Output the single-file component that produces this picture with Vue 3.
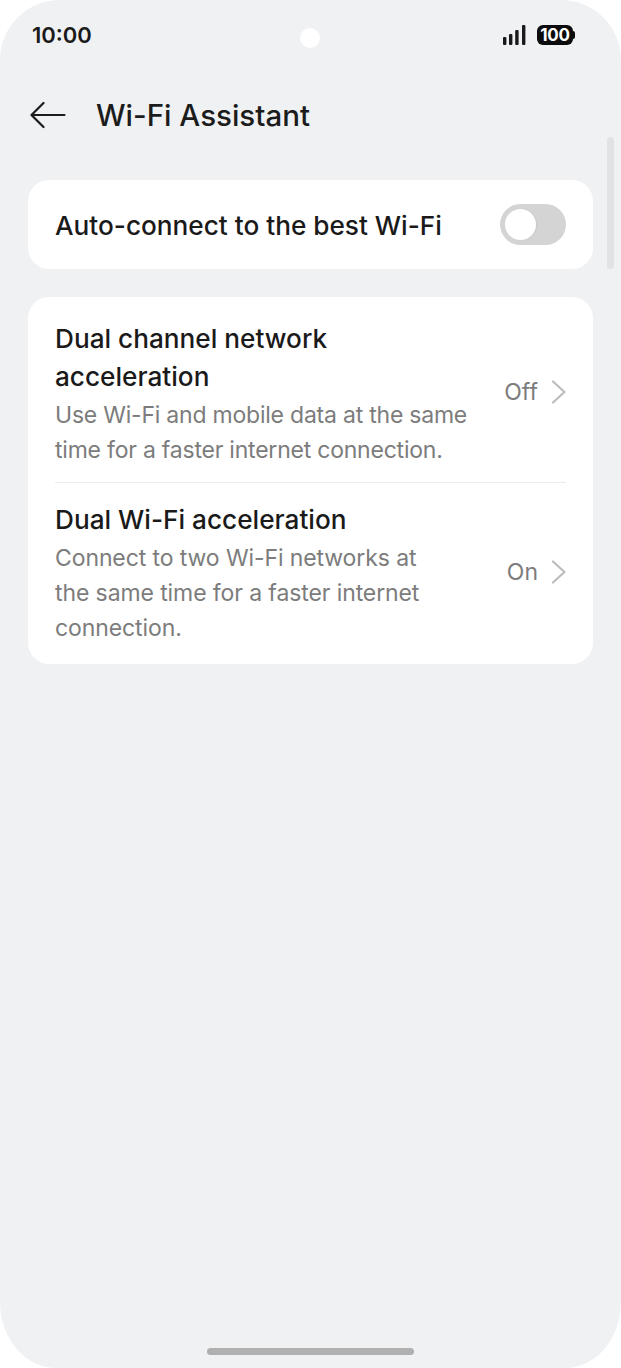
<script setup>
const rows = [
  { title: 'Dual channel network acceleration', desc: 'Use Wi-Fi and mobile data at the same time for a faster internet connection.', value: 'Off' },
  { title: 'Dual Wi-Fi acceleration', desc: 'Connect to two Wi-Fi networks at the same time for a faster internet connection.', value: 'On' },
]
</script>

<template>
  <div class="phone">
    <div class="camera"></div>
    <div class="scrollbar"></div>
    <header class="status">
      <span class="time">10:00</span>
      <div class="status-right">
        <svg class="signal" width="23" height="20" viewBox="0 0 23 20">
          <rect x="0" y="12" width="3.4" height="8" rx="1" />
          <rect x="6" y="9" width="3.4" height="11" rx="1" />
          <rect x="12.2" y="5" width="3.4" height="15" rx="1" />
          <rect x="19" y="0" width="3.4" height="20" rx="1" />
        </svg>
        <div class="battery"><span>100</span></div>
      </div>
    </header>
    <div class="toolbar">
      <svg class="back" width="36" height="28" viewBox="0 0 36 28" fill="none" stroke="#1c1c1c" stroke-width="2.2" stroke-linecap="round" stroke-linejoin="round">
        <path d="M1.5 14H34.5M13.5 2L1.5 14L13.5 26" />
      </svg>
      <h1>Wi-Fi Assistant</h1>
    </div>
    <section class="card single">
      <span class="label">Auto-connect to the best Wi-Fi</span>
      <div class="switch"><div class="knob"></div></div>
    </section>
    <section class="card list">
      <div v-for="(r, i) in rows" :key="r.title" class="row" :class="i === 0 ? 'first' : 'second'">
        <div class="text">
          <div class="label">{{ r.title }}</div>
          <div class="desc">{{ r.desc }}</div>
        </div>
        <div class="trail">
          <div class="value">{{ r.value }}</div>
          <svg class="chev" width="15" height="24" viewBox="0 0 15 24" fill="none" stroke="#bcbcbc" stroke-width="2.2" stroke-linecap="round" stroke-linejoin="round">
            <path d="M2 1.5L13.5 12L2 22.5" />
          </svg>
        </div>
      </div>
    </section>
    <div class="home"></div>
  </div>
</template>

<style>
html, body { margin: 0; background: #fff; }
</style>

<style scoped>
.phone {
  position: relative;
  width: 621px;
  height: 1368px;
  box-sizing: border-box;
  background: #f0f1f3;
  border-radius: 60px 60px 56px 56px / 60px 60px 66px 66px;
  overflow: hidden;
  font-family: Inter, "Noto Sans", sans-serif;
  color: #1a1a1a;
  padding: 0 28px;
}
.camera {
  position: absolute;
  left: 300px;
  top: 28px;
  width: 20px;
  height: 20px;
  border-radius: 50%;
  background: #fff;
}
.scrollbar {
  position: absolute;
  left: 607px;
  top: 137px;
  width: 7px;
  height: 132px;
  border-radius: 4px;
  background: #e1e2e3;
}
.status {
  height: 70px;
  box-sizing: border-box;
  display: flex;
  align-items: flex-start;
  justify-content: space-between;
  padding: 20px 18px 0 4px;
}
.time {
  font-size: 22px;
  font-weight: 600;
  line-height: 30px;
  color: #1a1a1a;
}
.status-right {
  display: flex;
  align-items: flex-start;
  gap: 11px;
  padding-top: 5px;
}
.signal { fill: #1a1a1a; display: block; }
.battery {
  position: relative;
  width: 36px;
  height: 20px;
  border-radius: 6px;
  background: #0c0c0c;
  color: #fff;
  font-size: 17px;
  font-weight: 700;
  line-height: 20px;
  text-align: center;
  margin-right: 2px;
  letter-spacing: -0.2px;
}
.battery::after {
  content: "";
  position: absolute;
  right: -2px;
  top: 6px;
  width: 2px;
  height: 8px;
  border-radius: 0 2px 2px 0;
  background: #0c0c0c;
}
.toolbar {
  height: 90px;
  display: flex;
  align-items: center;
  gap: 30px;
  padding: 0 0 0 2px;
  box-sizing: border-box;
}
h1 {
  margin: 0;
  font-size: 29.5px;
  font-weight: 450;
  line-height: 40px;
  color: #1c1c1c;
}
.card {
  background: #fff;
  border-radius: 21px;
  box-sizing: border-box;
  padding: 0 27px;
}
.single {
  margin-top: 20px;
  height: 89px;
  display: flex;
  align-items: center;
  justify-content: space-between;
}
.single .label { margin-top: 2px; }
.label {
  font-size: 26.2px;
  font-weight: 450;
  line-height: 38px;
  color: #1a1a1a;
}
.switch {
  width: 66px;
  height: 41px;
  border-radius: 21px;
  background: #d4d4d4;
  padding: 5px;
  box-sizing: border-box;
}
.knob {
  width: 31px;
  height: 31px;
  border-radius: 50%;
  background: #fff;
  box-shadow: 1px 0 2px rgba(0, 0, 0, 0.06);
}
.list {
  margin-top: 28px;
  height: 367px;
}
.row {
  display: flex;
  align-items: center;
  justify-content: space-between;
}
.first {
  border-bottom: 1px solid #ececec;
  padding: 23px 0 14px;
}
.second {
  padding: 18px 0;
}
.first .text { width: 420px; }
.second .text { width: 395px; }
.first .trail { margin-bottom: 4px; }
.second .trail { margin-top: -3px; }
.desc {
  margin-top: 2px;
  font-size: 23px;
  font-weight: 400;
  letter-spacing: -0.22px;
  line-height: 35px;
  color: #7c7c7c;
}
.second .desc { letter-spacing: -0.1px; }
.trail {
  display: flex;
  align-items: center;
  gap: 13px;
}
.value {
  font-size: 23px;
  line-height: 35px;
  color: #7c7c7c;
  white-space: nowrap;
}
.chev { display: block; flex: none; }
.home {
  position: absolute;
  left: 207px;
  top: 1348px;
  width: 207px;
  height: 7px;
  border-radius: 4px;
  background: #b0b0b0;
}
</style>
